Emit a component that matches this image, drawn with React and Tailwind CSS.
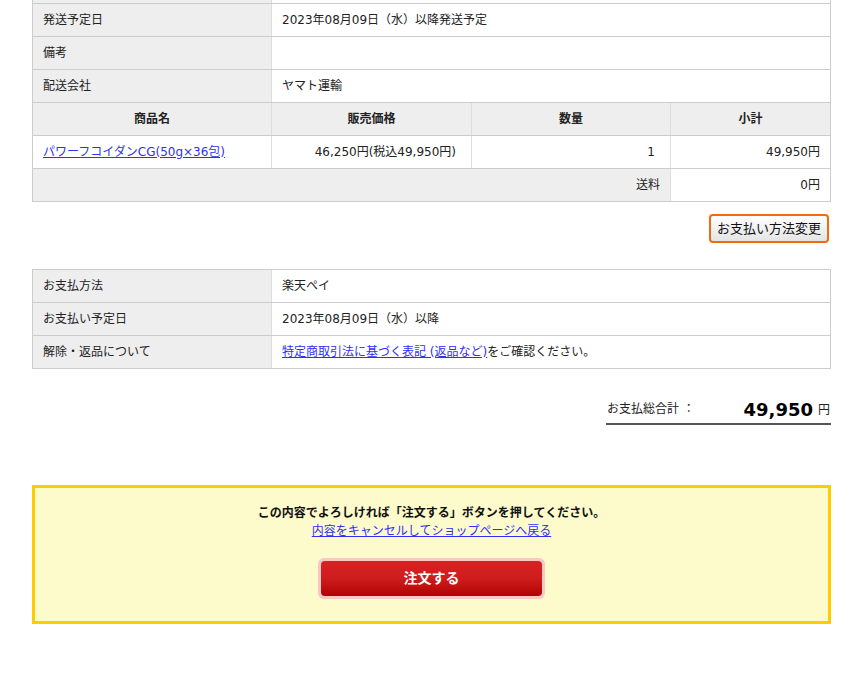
const font = { fontFamily: '"DejaVu Sans", "Noto Sans CJK JP", sans-serif' };

function InfoRow({ label, children }) {
  return (
    <div className="grid grid-cols-[239px_1fr] border-b border-[#cccccc]">
      <div className="bg-[#eeeeee] border-r border-[#dddddd] h-[32px] flex items-center pl-[10px]">{label}</div>
      <div className="bg-white h-[32px] flex items-center pl-[10px]">{children}</div>
    </div>
  );
}

export default function App() {
  return (
    <div className="w-[861px] h-[686px] bg-white text-[12px] text-[#222] overflow-hidden" style={font}>
      <div className="ml-[32px] w-[799px]">
        {/* top info table (scrolled) */}
        <div className="border-x border-[#cccccc]">
          <div className="grid grid-cols-[239px_1fr] border-b border-[#cccccc]">
            <div className="bg-[#eeeeee] border-r border-[#dddddd] h-[3px]" />
            <div className="bg-white h-[3px]" />
          </div>
          <InfoRow label="発送予定日">2023年08月09日（水）以降発送予定</InfoRow>
          <InfoRow label="備考"></InfoRow>
          <InfoRow label="配送会社">ヤマト運輸</InfoRow>
          <div className="grid grid-cols-[239px_200px_199px_1fr] border-b border-[#cccccc] bg-[#eeeeee] font-bold">
            <div className="h-[32px] flex items-center justify-center border-r border-[#dddddd]">商品名</div>
            <div className="h-[32px] flex items-center justify-center border-r border-[#dddddd]">販売価格</div>
            <div className="h-[32px] flex items-center justify-center border-r border-[#dddddd]">数量</div>
            <div className="h-[32px] flex items-center justify-center">小計</div>
          </div>
          <div className="grid grid-cols-[239px_200px_199px_1fr] border-b border-[#cccccc] bg-white">
            <div className="h-[32px] flex items-center pl-[10px] border-r border-[#dddddd]">
              <a href="#" className="text-[#2f2ff5] underline">パワーフコイダンCG(50g×36包)</a>
            </div>
            <div className="h-[32px] flex items-center justify-end pr-[15px] border-r border-[#dddddd]">46,250円(税込49,950円)</div>
            <div className="h-[32px] flex items-center justify-end pr-[15px] border-r border-[#dddddd]">1</div>
            <div className="h-[32px] flex items-center justify-end pr-[10px]">49,950円</div>
          </div>
          <div className="grid grid-cols-[638px_1fr] border-b border-[#cccccc]">
            <div className="h-[32px] flex items-center justify-end pr-[10px] bg-[#eeeeee] border-r border-[#dddddd]">送料</div>
            <div className="h-[32px] flex items-center justify-end pr-[10px] bg-white">0円</div>
          </div>
        </div>

        <div className="flex justify-end mt-[12px] pr-[2px]">
          <button className="h-[29px] px-[6px] border-2 border-[#f26a10] rounded-[4px] bg-gradient-to-b from-white to-[#e4e4e4] text-[13px] text-[#111] flex items-center">
            お支払い方法変更
          </button>
        </div>

        <div className="mt-[26px] border-x border-t border-[#cccccc]">
          <InfoRow label="お支払方法">楽天ペイ</InfoRow>
          <InfoRow label="お支払い予定日">2023年08月09日（水）以降</InfoRow>
          <InfoRow label="解除・返品について">
            <a href="#" className="text-[#2f2ff5] underline">特定商取引法に基づく表記 (返品など)</a>をご確認ください。
          </InfoRow>
        </div>

        <div className="flex justify-end mt-[31px]">
          <div className="w-[225px] border-b-2 border-[#555555] flex items-end pb-[4px]">
            <span className="text-[12px] pl-[1px] pb-[1px]">お支払総合計 ：</span>
            <span className="ml-auto text-[18px] font-bold text-black leading-none">49,950</span>
            <span className="text-[12px] ml-[5px] mr-[1px]">円</span>
          </div>
        </div>

        <div className="mt-[60px] border-[3px] border-[#ffcc00] bg-[#fdfacb] h-[139px] flex flex-col items-center pt-[16px]">
          <p className="font-bold text-[12px] leading-[18px] text-[#111]">この内容でよろしければ「注文する」ボタンを押してください。</p>
          <a href="#" className="text-[#2f2ff5] underline text-[12px] leading-[18px]">内容をキャンセルしてショップページへ戻る</a>
          <div className="mt-[18px] p-[3px] rounded-[6px] bg-[#fcc6c6]">
            <button className="w-[221px] h-[35px] rounded-[4px] bg-gradient-to-b from-[#d62222] via-[#cf1c1c] to-[#b00000] text-white font-bold text-[14px]">
              注文する
            </button>
          </div>
        </div>
      </div>
    </div>
  );
}
